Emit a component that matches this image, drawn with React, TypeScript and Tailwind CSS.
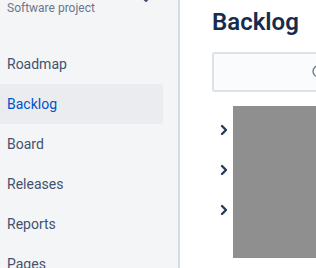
import { ChevronDown, ChevronRight, Search } from "lucide-react";

const navItems = ["Roadmap", "Backlog", "Board", "Releases", "Reports", "Pages"];

export default function App() {
  return (
    <div className="flex h-[268px] w-[316px] overflow-hidden bg-white font-['Roboto',sans-serif]">
      {/* Sidebar */}
      <aside className="w-[180px] shrink-0 bg-[#f4f5f7] border-r-2 border-[#d5dbe6]">
        <div className="flex items-center justify-between pl-[7px] pr-[24px] h-[16px]">
          <span className="text-[12px] text-[#6b778c]">Software project</span>
          <ChevronDown className="w-4 h-4 -translate-y-[9px] text-[#42526e]" strokeWidth={3} />
        </div>
        <nav className="mt-[28px] pr-[15px]">
          {navItems.map((item) => (
            <div
              key={item}
              className={
                item === "Backlog"
                  ? "flex items-center h-10 pl-[7px] rounded-r-[3px] bg-[#ebecf0] text-[#0052cc] text-[14px]"
                  : "flex items-center h-10 pl-[7px] text-[#42526e] text-[14px]"
              }
            >
              {item}
            </div>
          ))}
        </nav>
      </aside>

      {/* Main */}
      <main className="flex-1 min-w-0 pl-[32px] pt-[6px]">
        <h1 className="text-[24px] leading-8 font-semibold text-[#172b4d]">Backlog</h1>
        <div className="mt-[14px] w-[300px] h-10 flex items-center pl-[97px] rounded-[3px] border-2 border-[#dfe1e6] bg-[#fafbfc]">
          <Search className="w-4 h-4 text-[#6b778c]" strokeWidth={2} />
        </div>
        <div className="mt-[14px] flex">
          <div className="w-[21px] shrink-0 flex flex-col pt-[16px] pl-[4px] gap-[24px]">
            {[0, 1, 2].map((i) => (
              <ChevronRight key={i} className="w-4 h-4 text-[#253858]" strokeWidth={3.5} />
            ))}
          </div>
          <div className="w-[200px] h-[152px] shrink-0 bg-[#8f8f8f]" />
        </div>
      </main>
    </div>
  );
}
